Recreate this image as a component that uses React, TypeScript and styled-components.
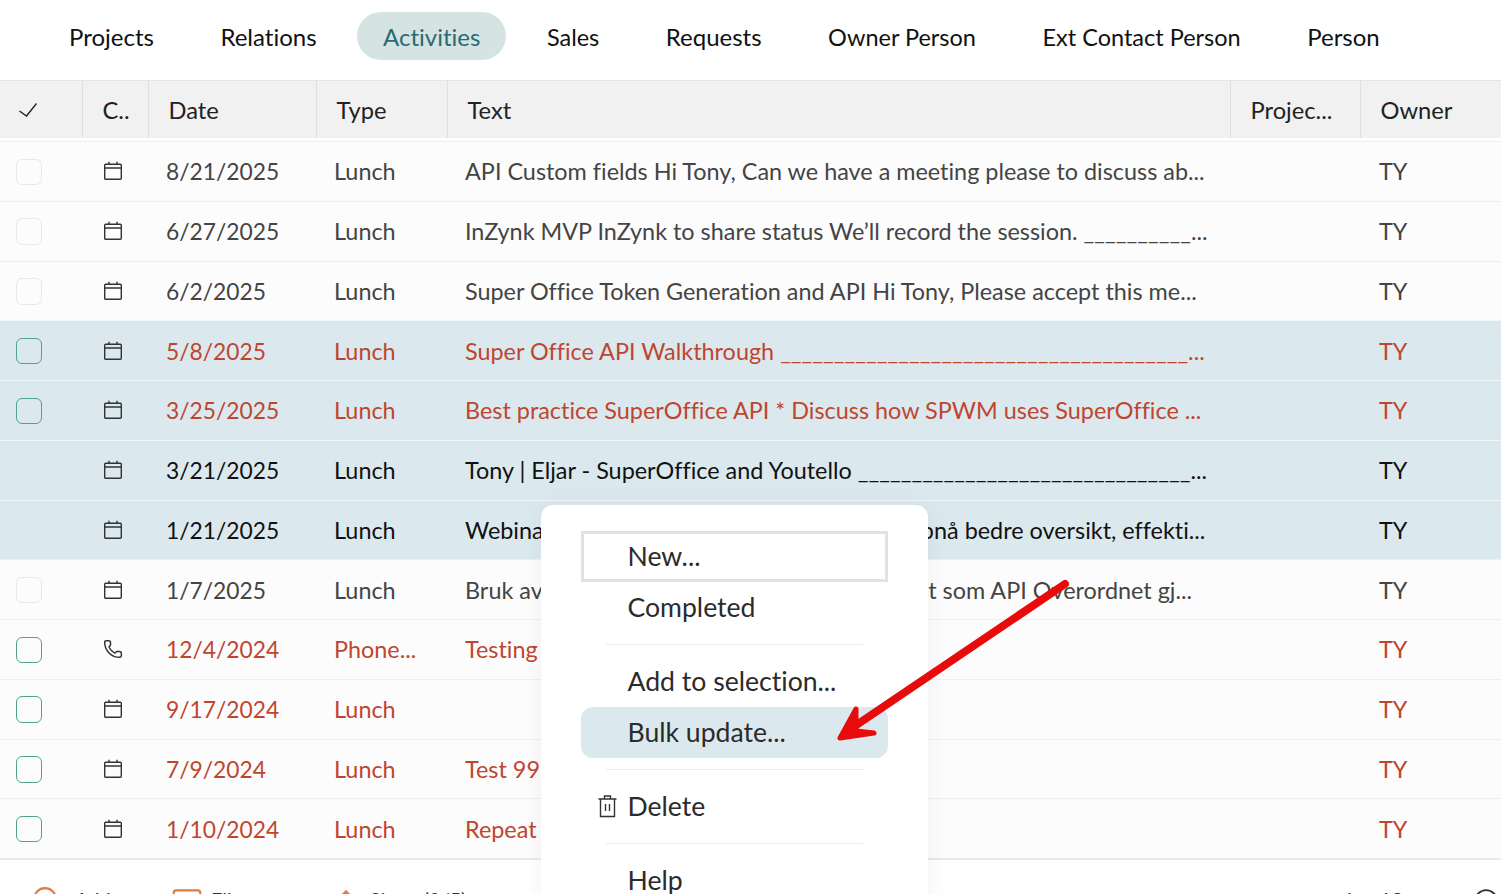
import React from 'react'
import styled, { createGlobalStyle } from 'styled-components'
import { Phone, Circle, Mail, ArrowUp, Search } from 'lucide-react'

const GlobalStyle = createGlobalStyle`
  html, body {
    margin: 0;
    padding: 0;
    height: 100%;
    overflow: hidden;
    background: #fff;
    font-family: Lato, "Liberation Sans", sans-serif;
    font-variant-ligatures: none;
  }
`

const Page = styled.div`
  position: relative;
  width: 1501px;
  height: 894px;
  overflow: hidden;
`

const TabBar = styled.nav`
  height: 80px;
  display: flex;
  align-items: flex-start;
  padding: 12px 0 0 43px;
  box-sizing: border-box;
`

const Tab = styled.div<{ $active?: boolean; $tight?: boolean }>`
  height: 48px;
  display: flex;
  align-items: center;
  padding: ${({ $tight }) => ($tight ? '1px' : '0')} 26px 0;
  box-sizing: border-box;
  margin-right: 14.5px;
  border-radius: 24px;
  font-size: ${({ $tight }) => ($tight ? '23.5px' : '24px')};
  color: ${({ $active }) => ($active ? '#2a6a70' : '#111')};
  background: ${({ $active }) => ($active ? '#d5e3e3' : 'transparent')};
`

const Grid = styled.div`
  display: grid;
  grid-template-columns: 83px 66px 168px 131px 783px 130px 140px;
`

const HeaderRow = styled(Grid)`
  height: 58px;
  background: #f1f1f1;
  border-top: 1px solid #e4e4e4;
  box-sizing: border-box;
  margin-bottom: 3px;
`

const HeaderCell = styled.div`
  display: flex;
  align-items: center;
  padding-left: 19.5px;
  font-size: 23.7px;
  color: #222;
  border-right: 1px solid #dfdfdf;
  white-space: nowrap;

  &:last-child {
    border-right: none;
  }
`

const Row = styled(Grid)<{ $selected?: boolean }>`
  height: 59.75px;
  box-sizing: border-box;
  background: ${({ $selected }) => ($selected ? '#dbe9ee' : '#fcfcfc')};
  border-top: 1px solid ${({ $selected }) => ($selected ? '#f1f6f7' : '#efefef')};
`

const Cell = styled.div<{ $tone: string }>`
  display: flex;
  align-items: center;
  padding-left: 17px;
  font-size: 23.4px;
  color: ${({ $tone }) => $tone};
  white-space: nowrap;
  overflow: hidden;

  &:last-child {
    padding-left: 18px;
  }
`

const DateCell = styled(Cell)`
  font-size: 22.8px;
`

const IconCell = styled.div`
  display: flex;
  align-items: center;
  padding-left: 20px;
  color: #333;
`

const CheckCell = styled.div`
  display: flex;
  align-items: center;
  padding: 1px 0 0 16px;
`

const Box = styled.div<{ $variant: 'plain' | 'green' | 'none' }>`
  width: 26px;
  height: 26.5px;
  border-radius: 6px;
  box-sizing: border-box;
  border: 1.3px solid
    ${({ $variant }) =>
      $variant === 'green' ? '#4fa58c' : $variant === 'plain' ? '#e8e8e8' : 'transparent'};
`

const Footer = styled.div`
  border-top: 2px solid #e8e8e8;
  height: 40px;
  display: flex;
  align-items: flex-start;
  padding: 26px 0 0 32px;
  box-sizing: border-box;
  font-size: 20px;
  color: #333;
`

const FooterItem = styled.div<{ $width: number; $gap: number }>`
  width: ${({ $width }) => $width}px;
  display: flex;
  align-items: flex-start;
  gap: ${({ $gap }) => $gap}px;
  white-space: nowrap;

  svg {
    flex: none;
    color: #e07b42;
  }
`

const FooterLabel = styled.span`
  margin-top: 1px;
`

const FooterRight = styled.div`
  margin-left: auto;
  margin-right: -3px;
  display: flex;
  align-items: flex-start;
  gap: 18px;
`

const PageInfo = styled.span`
  margin: 1px 50px 0 10px;
`

const Menu = styled.div`
  position: absolute;
  left: 541px;
  top: 505px;
  width: 387px;
  height: 420px;
  background: #fff;
  border-radius: 12px;
  box-sizing: border-box;
  padding: 26px 40px;
  display: flex;
  flex-direction: column;
  box-shadow: 0 0 24px rgba(0, 0, 0, 0.05);
`

const MenuItem = styled.div<{ $focus?: boolean; $hover?: boolean }>`
  position: relative;
  height: 51px;
  flex: none;
  display: flex;
  align-items: center;
  padding-left: ${({ $focus }) => ($focus ? '43.5px' : '46.5px')};
  padding-bottom: 2px;
  box-sizing: border-box;
  font-size: 26.6px;
  color: #2b2b2b;
  border: ${({ $focus }) => ($focus ? '3px solid #e2e2e2' : 'none')};
  border-radius: ${({ $hover }) => ($hover ? '12px' : '0')};
  background: ${({ $hover }) => ($hover ? '#dbe9ee' : 'transparent')};
`

const MenuIcon = styled.svg`
  position: absolute;
  left: 17px;
  top: 14px;
`

const Divider = styled.div`
  height: 1px;
  flex: none;
  margin: 11px 25px;
  background: #ececec;
`

const Arrow = styled.svg`
  position: absolute;
  left: 820px;
  top: 560px;
  pointer-events: none;
`

const BLACK = '#111'
const GREY = '#444'
const RED = '#c0452f'

type Activity = {
  date: string
  type: string
  text: string
  tone: string
  box: 'plain' | 'green' | 'none'
  selected?: boolean
  phone?: boolean
}

const rows: Activity[] = [
  { date: '8/21/2025', type: 'Lunch', text: 'API Custom fields Hi Tony, Can we have a meeting please to discuss ab...', tone: GREY, box: 'plain' },
  { date: '6/27/2025', type: 'Lunch', text: 'InZynk MVP InZynk to share status We’ll record the session. __________...', tone: GREY, box: 'plain' },
  { date: '6/2/2025', type: 'Lunch', text: 'Super Office Token Generation and API Hi Tony, Please accept this me...', tone: GREY, box: 'plain' },
  { date: '5/8/2025', type: 'Lunch', text: 'Super Office API Walkthrough ______________________________________...', tone: RED, box: 'green', selected: true },
  { date: '3/25/2025', type: 'Lunch', text: 'Best practice SuperOffice API * Discuss how SPWM uses SuperOffice ...', tone: RED, box: 'green', selected: true },
  { date: '3/21/2025', type: 'Lunch', text: 'Tony | Eljar - SuperOffice and Youtello _______________________________...', tone: BLACK, box: 'none', selected: true },
  { date: '1/21/2025', type: 'Lunch', text: 'Webinar: Derfor SuperOffice kan gi deg å oppnå bedre oversikt, effekti...', tone: BLACK, box: 'none', selected: true },
  { date: '1/7/2025', type: 'Lunch', text: 'Bruk av SuperOffice API nå, slik at det blir satt som API Overordnet gj...', tone: GREY, box: 'plain' },
  { date: '12/4/2024', type: 'Phone...', text: 'Testing', tone: RED, box: 'green', phone: true },
  { date: '9/17/2024', type: 'Lunch', text: '', tone: RED, box: 'green' },
  { date: '7/9/2024', type: 'Lunch', text: 'Test 99', tone: RED, box: 'green' },
  { date: '1/10/2024', type: 'Lunch', text: 'Repeat', tone: RED, box: 'green' },
]

const tabs = [
  { label: 'Projects' },
  { label: 'Relations' },
  { label: 'Activities', active: true },
  { label: 'Sales', tight: true },
  { label: 'Requests' },
  { label: 'Owner Person', tight: true },
  { label: 'Ext Contact Person', tight: true },
  { label: 'Person' },
]

const CalendarIcon = () => (
  <svg width={20} height={20} viewBox="0 0 20 20" fill="none" stroke="currentColor" strokeWidth={1.4}>
    <rect x={1.7} y={3.2} width={16.6} height={15.1} rx={1} />
    <path d="M1.7 7 H18.3 M6 0.8 V4 M14 0.8 V4" />
  </svg>
)

export default function App() {
  return (
    <Page>
      <GlobalStyle />
      <TabBar>
        {tabs.map((t) => (
          <Tab key={t.label} $active={t.active} $tight={t.tight}>
            {t.label}
          </Tab>
        ))}
      </TabBar>

      <HeaderRow>
        <HeaderCell>
          <svg width={18} height={14} viewBox="0 0 18 14" fill="none" stroke="currentColor" strokeWidth={1.4} style={{ marginLeft: -1 }}>
            <path d="M0.5 8 L7.5 13 L17.5 0.5" />
          </svg>
        </HeaderCell>
        <HeaderCell>C..</HeaderCell>
        <HeaderCell>Date</HeaderCell>
        <HeaderCell>Type</HeaderCell>
        <HeaderCell>Text</HeaderCell>
        <HeaderCell>Projec...</HeaderCell>
        <HeaderCell>Owner</HeaderCell>
      </HeaderRow>

      {rows.map((r) => (
        <Row key={r.date} $selected={r.selected}>
          <CheckCell>
            <Box $variant={r.box} />
          </CheckCell>
          <IconCell>{r.phone ? <Phone size={20} strokeWidth={1.8} /> : <CalendarIcon />}</IconCell>
          <DateCell $tone={r.tone}>{r.date}</DateCell>
          <Cell $tone={r.tone}>{r.type}</Cell>
          <Cell $tone={r.tone}>{r.text}</Cell>
          <Cell $tone={r.tone} />
          <Cell $tone={r.tone}>TY</Cell>
        </Row>
      ))}

      <Footer>
        <FooterItem $width={139} $gap={17}>
          <Circle size={26} strokeWidth={2} />
          <FooterLabel>Add</FooterLabel>
        </FooterItem>
        <FooterItem $width={162} $gap={8}>
          <Mail size={32} strokeWidth={1.6} style={{ marginTop: -1 }} />
          <FooterLabel>Filter</FooterLabel>
        </FooterItem>
        <FooterItem $width={160} $gap={11}>
          <ArrowUp size={26} strokeWidth={2} />
          <FooterLabel>Show (0/5)</FooterLabel>
        </FooterItem>
        <FooterRight>
          <FooterLabel>i</FooterLabel>
          <PageInfo>12</PageInfo>
          <Search size={33} strokeWidth={1.4} />
        </FooterRight>
      </Footer>

      <Menu>
        <MenuItem $focus>New...</MenuItem>
        <MenuItem>Completed</MenuItem>
        <Divider />
        <MenuItem>Add to selection...</MenuItem>
        <MenuItem $hover>Bulk update...</MenuItem>
        <Divider />
        <MenuItem>
          <MenuIcon width={19} height={23} viewBox="0 0 19 23" fill="none" stroke="#333" strokeWidth={1.4}>
            <path d="M6.5 4 V1 H12.5 V4 M0.5 4 H18.5 M2.5 4 V21.5 H16.5 V4 M7.5 9 V16 M11.5 9 V16" />
          </MenuIcon>
          Delete
        </MenuItem>
        <Divider />
        <MenuItem>Help</MenuItem>
      </Menu>

      <Arrow width={270} height={200} viewBox="0 0 270 200">
        <path d="M245 24 L32 168" stroke="#e90b0b" strokeWidth={8} strokeLinecap="round" fill="none" />
        <path
          d="M36 149 L20 178 L54 173 L36 171 Z"
          fill="#e90b0b"
          stroke="#e90b0b"
          strokeWidth={5}
          strokeLinejoin="round"
        />
      </Arrow>
    </Page>
  )
}
